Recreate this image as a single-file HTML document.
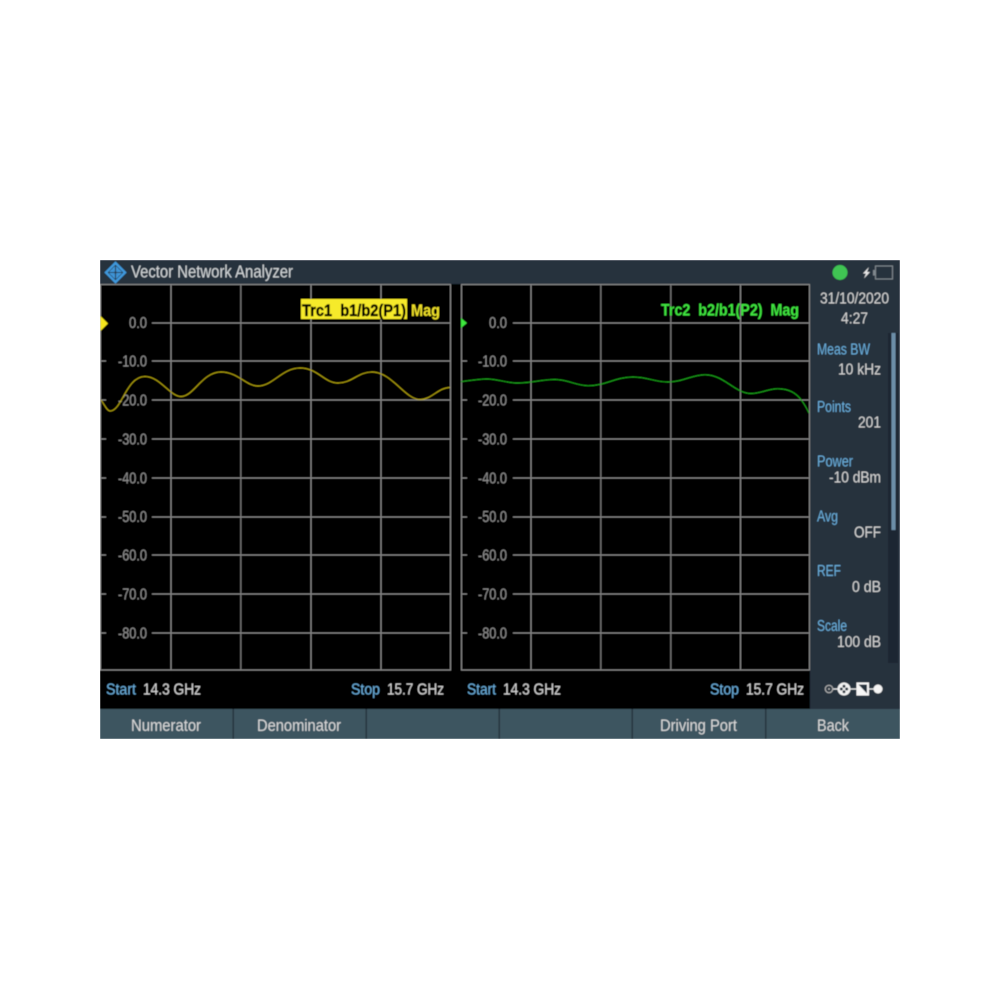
<!DOCTYPE html>
<html><head><meta charset="utf-8"><style>
html,body{margin:0;padding:0;background:#fff}
svg{display:block}
text{font-family:"Liberation Sans",sans-serif}
.a{fill:#8e8e8e;font-size:15.500px}
.b{fill:#6aaddb;font-size:15.500px}
.w{fill:#d4d4d4;font-size:15.500px}
.k{fill:#d8d8d8;font-size:17px}
</style></head><body>
<svg width="1000" height="1000" viewBox="0 0 1000 1000" xmlns="http://www.w3.org/2000/svg">
<defs><filter id="f" x="0" y="0" width="100%" height="100%"><feGaussianBlur stdDeviation="0.45"/></filter></defs>
<rect width="1000" height="1000" fill="#fff"/>
<g filter="url(#f)">
<rect x="100" y="260" width="800" height="479" fill="#25323c"/>
<rect x="100" y="284" width="710" height="425" fill="#000"/>
<rect x="100" y="709" width="800" height="30" fill="#3e5461"/>
<g fill="#26343e"><rect x="232.500" y="709" width="1.500" height="30"/><rect x="365.500" y="709" width="1.500" height="30"/><rect x="498.500" y="709" width="1.500" height="30"/><rect x="631.500" y="709" width="1.500" height="30"/><rect x="765" y="709" width="1.500" height="30"/></g>

<!-- logo -->
<path d="M115.500 263L125 272.500L115.500 282L106 272.500Z" fill="none" stroke="#3f98dc" stroke-width="2.400"/>
<g fill="#3f98dc"><path d="M115.500 265.500L119 269L115.500 272.500L112 269Z"/><path d="M115.500 272.500L119 276L115.500 279.500L112 276Z"/><path d="M108.500 272.500L112 269L115.500 272.500L112 276Z"/><path d="M122.500 272.500L119 269L115.500 272.500L119 276Z"/></g>
<path d="M115.500 265.500V279.500M108.500 272.500H122.500" stroke="#25323c" stroke-width="1.100"/>
<text x="131" y="277.500" textLength="162" lengthAdjust="spacingAndGlyphs" fill="#d2d6d8" style="font-size:17.500px">Vector Network Analyzer</text>

<!-- status -->
<circle cx="840" cy="272.500" r="7.500" fill="#3fc452"/>
<path d="M869 267L863 273.500H866L864 278.500L870 272H867Z" fill="#e8e8e8"/>
<rect x="875.500" y="266" width="17" height="13" fill="none" stroke="#7f878d" stroke-width="1.100"/>
<rect x="873" y="270" width="2" height="5.500" fill="#7f878d"/>

<!-- grid left -->
<g stroke="#8c8c8c" stroke-width="1" fill="none">
<rect x="100.500" y="284.500" width="350" height="385.500"/>
<path d="M171 284V670M240.800 284V670M311 284V670M381 284V670"/>
<path d="M152 323H450M152 361H450M152 400H450M152 439H450M152 478H450M152 517H450M152 555H450M152 594H450M152 633H450"/>
<path d="M100 361H106M100 400H106M100 439H106M100 478H106M100 517H106M100 555H106M100 594H106M100 633H106"/>
</g>
<!-- grid right -->
<g stroke="#8c8c8c" stroke-width="1" fill="none">
<rect x="461.500" y="284.500" width="348" height="385.500"/>
<path d="M531 284V670M600.800 284V670M670.800 284V670M740.500 284V670"/>
<path d="M513 323H809M513 361H809M513 400H809M513 439H809M513 478H809M513 517H809M513 555H809M513 594H809M513 633H809"/>
<path d="M461 361H467M461 400H467M461 439H467M461 478H467M461 517H467M461 555H467M461 594H467M461 633H467"/>
</g>

<!-- axis labels -->
<g>
<text class="a" x="129" y="328" textLength="18" lengthAdjust="spacingAndGlyphs">0.0</text><text class="a" x="118" y="366.500" textLength="29" lengthAdjust="spacingAndGlyphs">-10.0</text><text class="a" x="118" y="405.500" textLength="29" lengthAdjust="spacingAndGlyphs">-20.0</text><text class="a" x="118" y="444.500" textLength="29" lengthAdjust="spacingAndGlyphs">-30.0</text><text class="a" x="118" y="483.500" textLength="29" lengthAdjust="spacingAndGlyphs">-40.0</text><text class="a" x="118" y="522" textLength="29" lengthAdjust="spacingAndGlyphs">-50.0</text><text class="a" x="118" y="560.500" textLength="29" lengthAdjust="spacingAndGlyphs">-60.0</text><text class="a" x="118" y="599.500" textLength="29" lengthAdjust="spacingAndGlyphs">-70.0</text><text class="a" x="118" y="638.500" textLength="29" lengthAdjust="spacingAndGlyphs">-80.0</text>
<text class="a" x="489" y="328" textLength="18" lengthAdjust="spacingAndGlyphs">0.0</text><text class="a" x="478" y="366.500" textLength="29" lengthAdjust="spacingAndGlyphs">-10.0</text><text class="a" x="478" y="405.500" textLength="29" lengthAdjust="spacingAndGlyphs">-20.0</text><text class="a" x="478" y="444.500" textLength="29" lengthAdjust="spacingAndGlyphs">-30.0</text><text class="a" x="478" y="483.500" textLength="29" lengthAdjust="spacingAndGlyphs">-40.0</text><text class="a" x="478" y="522" textLength="29" lengthAdjust="spacingAndGlyphs">-50.0</text><text class="a" x="478" y="560.500" textLength="29" lengthAdjust="spacingAndGlyphs">-60.0</text><text class="a" x="478" y="599.500" textLength="29" lengthAdjust="spacingAndGlyphs">-70.0</text><text class="a" x="478" y="638.500" textLength="29" lengthAdjust="spacingAndGlyphs">-80.0</text>
</g>

<!-- markers -->
<path d="M100.500 316L108 323.500L100.500 331Z" fill="#f5e61e"/>
<path d="M461 318L467 323L461 328Z" fill="#3ee83e"/>

<!-- traces -->
<path fill="none" stroke="#b8a80f" stroke-width="1" d="M101 400C104 404 107 411 110 411C122 411 126 376.500 145 376.500C160 376.500 170 396.500 181 396.500C194 396.500 202 372 221 372C238 372 246 386 258 386C273 386 282 368 300 368C318 368 324 383 338 383C352 383 358 372 372 372C392 372 405 399.500 420 399.500C432 399.500 438 387.500 450 387.500"/>
<path fill="none" stroke="#1fa81f" stroke-width="1" d="M461 381.700C470 380.500 478 379 487 379C498 379 506 383 518 383C532 383 541 379.500 555 379.500C568 379.500 576 385.700 588 385.700C606 385.700 615 377 633 377C648 377 654 382 668 382C683 382 692 374.700 705 374.700C724 374.700 735 393.500 751 393.500C762 393.500 767 388.700 778 388.700C787 388.700 796 392 802 401C805 405 807 409 809 413"/>

<!-- trace labels -->
<rect x="301" y="299" width="106" height="20" fill="#f6ea2a"/>
<text x="302" y="316" textLength="104" lengthAdjust="spacingAndGlyphs" fill="#000" stroke="#000" stroke-width=".5" style="white-space:pre;font-weight:700;font-size:17px">Trc1  b1/b2(P1)</text>
<text x="411" y="316" textLength="29" lengthAdjust="spacingAndGlyphs" fill="#efe02a" style="font-size:17px;font-weight:700">Mag</text>
<text x="661" y="315.500" textLength="138" lengthAdjust="spacingAndGlyphs" fill="#3fe63f" style="font-size:17px;font-weight:700;white-space:pre">Trc2  b2/b1(P2)  Mag</text>

<!-- footer -->
<text class="b" x="106" y="694.500" textLength="30" lengthAdjust="spacingAndGlyphs">Start</text>
<text class="w" x="143" y="694.500" textLength="58" lengthAdjust="spacingAndGlyphs">14.3 GHz</text>
<text class="b" x="351" y="694.500" textLength="29" lengthAdjust="spacingAndGlyphs">Stop</text>
<text class="w" x="387" y="694.500" textLength="57" lengthAdjust="spacingAndGlyphs">15.7 GHz</text>
<text class="b" x="467" y="694.500" textLength="29" lengthAdjust="spacingAndGlyphs">Start</text>
<text class="w" x="503" y="694.500" textLength="58" lengthAdjust="spacingAndGlyphs">14.3 GHz</text>
<text class="b" x="710" y="694.500" textLength="29" lengthAdjust="spacingAndGlyphs">Stop</text>
<text class="w" x="746" y="694.500" textLength="58" lengthAdjust="spacingAndGlyphs">15.7 GHz</text>

<!-- softkeys -->
<text class="k" x="131" y="731" textLength="70" lengthAdjust="spacingAndGlyphs">Numerator</text>
<text class="k" x="257" y="731" textLength="84" lengthAdjust="spacingAndGlyphs">Denominator</text>
<text class="k" x="660" y="731" textLength="77" lengthAdjust="spacingAndGlyphs">Driving Port</text>
<text class="k" x="817" y="731" textLength="32" lengthAdjust="spacingAndGlyphs">Back</text>

<!-- sidebar -->
<rect x="888" y="333" width="10" height="330" fill="#1b2830"/>
<rect x="891.500" y="333" width="4" height="197" fill="#6c8ea8"/>
<text class="w" x="820" y="303.500" textLength="69" lengthAdjust="spacingAndGlyphs">31/10/2020</text>
<text class="w" x="841" y="323.500" textLength="27" lengthAdjust="spacingAndGlyphs">4:27</text>

<text class="b" x="817" y="354.500" textLength="53" lengthAdjust="spacingAndGlyphs">Meas BW</text>
<text class="w" x="838" y="374.500" textLength="43" lengthAdjust="spacingAndGlyphs">10 kHz</text>
<text class="b" x="817" y="412" textLength="34" lengthAdjust="spacingAndGlyphs">Points</text>
<text class="w" x="858" y="427.500" textLength="23" lengthAdjust="spacingAndGlyphs">201</text>
<text class="b" x="817" y="466.500" textLength="36" lengthAdjust="spacingAndGlyphs">Power</text>
<text class="w" x="829" y="482.500" textLength="52" lengthAdjust="spacingAndGlyphs">-10 dBm</text>
<text class="b" x="817" y="521.500" textLength="21" lengthAdjust="spacingAndGlyphs">Avg</text>
<text class="w" x="854" y="537.500" textLength="27" lengthAdjust="spacingAndGlyphs">OFF</text>
<text class="b" x="817" y="576" textLength="24" lengthAdjust="spacingAndGlyphs">REF</text>
<text class="w" x="852" y="592" textLength="29" lengthAdjust="spacingAndGlyphs">0 dB</text>
<text class="b" x="817" y="631" textLength="30" lengthAdjust="spacingAndGlyphs">Scale</text>
<text class="w" x="837" y="647" textLength="44" lengthAdjust="spacingAndGlyphs">100 dB</text>

<!-- connection icon -->
<path d="M833 689H874" stroke="#e8e8e8" stroke-width="1.200"/>
<circle cx="829" cy="689" r="3.700" fill="#25323c" stroke="#b0b0b0" stroke-width="1.200"/>
<circle cx="829" cy="689" r="1" fill="#b0b0b0"/>
<circle cx="844" cy="689" r="6.500" fill="#f2f2f2"/>
<g fill="#25323c"><circle cx="841.300" cy="689" r="1.500"/><circle cx="846.700" cy="689" r="1.500"/><circle cx="844" cy="686.300" r="1.500"/><circle cx="844" cy="691.700" r="1.500"/></g>
<rect x="856.500" y="682.500" width="12.500" height="13" fill="#f7f7f7"/>
<path d="M858.500 684.500H867V693.500Z" fill="#25323c"/>
<circle cx="878" cy="689" r="4.500" fill="#f5f5f5"/>
</g>
</svg>
</body></html>
